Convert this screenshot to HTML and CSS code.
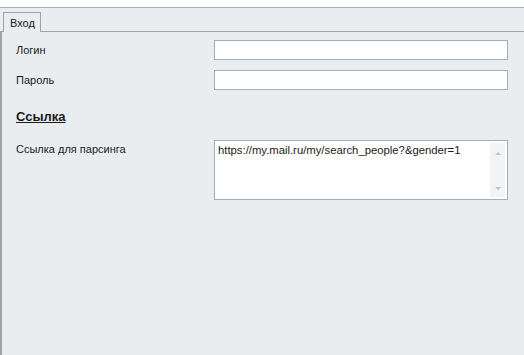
FILE: index.html
```html
<!DOCTYPE html>
<html lang="ru">
<head>
  <meta charset="UTF-8">
  <title>Вход</title>
  <link rel="stylesheet" href="styles.css">
</head>
<body>
  <div class="titlebar"></div>
  <div class="tabs">
    <div class="tab">Вход</div>
  </div>
  <div class="panel">
    <div class="row">
      <label class="label">Логин</label>
      <input class="field" type="text">
    </div>
    <div class="row">
      <label class="label">Пароль</label>
      <input class="field" type="password">
    </div>
    <h2 class="section">Ссылка</h2>
    <div class="row row-top">
      <label class="label">Ссылка для парсинга</label>
      <div class="memo">
        <div class="memo-text">https://my.mail.ru/my/search_people?&amp;gender=1</div>
        <div class="scroll">
          <span class="arrow up"></span>
          <span class="arrow down"></span>
        </div>
      </div>
    </div>
  </div>
</body>
</html>
```
FILE: styles.css
```css
html, body {
  height: 100%;
}

body {
  margin: 0;
  font-family: "Liberation Sans", Tahoma, sans-serif;
  font-size: 11px;
  color: #1a1a1a;
  background: #e9edf0;
  display: flex;
  flex-direction: column;
  overflow: hidden;
}

.titlebar {
  height: 7px;
  background: #ffffff;
  border-bottom: 1px solid #a9adb2;
}

.tabs {
  height: 23px;
  display: flex;
  align-items: flex-end;
  padding-left: 3px;
  border-bottom: 1px solid #a0a4a8;
}

.tab {
  width: 38px;
  height: 20px;
  margin-bottom: -1px;
  border: 1px solid #a0a4a8;
  border-bottom: none;
  background: #e9edf0;
  box-sizing: border-box;
  padding: 4px 0 0 6px;
}

.panel {
  flex: 1;
  border-left: 2px solid #a0a4a8;
  padding: 8px 16px 0 14px;
}

.row {
  display: flex;
  align-items: center;
  height: 20px;
  margin-bottom: 10px;
}

.row-top {
  align-items: flex-start;
  height: auto;
}

.label {
  width: 198px;
}

.row-top .label {
  padding-top: 3px;
}

.field {
  width: 294px;
  height: 20px;
  box-sizing: border-box;
  margin: 0;
  border: 1px solid #a7adb4;
  background: #ffffff;
}

.section {
  margin: 19px 0 15px 0;
  font-size: 13px;
  font-weight: bold;
  text-decoration: underline;
  line-height: 16px;
}

.memo {
  width: 294px;
  height: 60px;
  box-sizing: border-box;
  border: 1px solid #a7adb4;
  background: #ffffff;
  display: flex;
  justify-content: space-between;
}

.memo-text {
  padding: 3px 0 0 3px;
  font-size: 11.3px;
}

.scroll {
  width: 15px;
  margin: 2px 2px 2px 0;
  background: #f2f3f4;
  display: flex;
  flex-direction: column;
  justify-content: space-between;
  align-items: center;
  padding: 9px 0 7px;
  box-sizing: border-box;
}

.arrow {
  width: 0;
  height: 0;
  border-left: 3px solid transparent;
  border-right: 3px solid transparent;
}

.arrow.up {
  border-bottom: 3px solid #bfc3c7;
}

.arrow.down {
  border-top: 3px solid #bfc3c7;
}
```
